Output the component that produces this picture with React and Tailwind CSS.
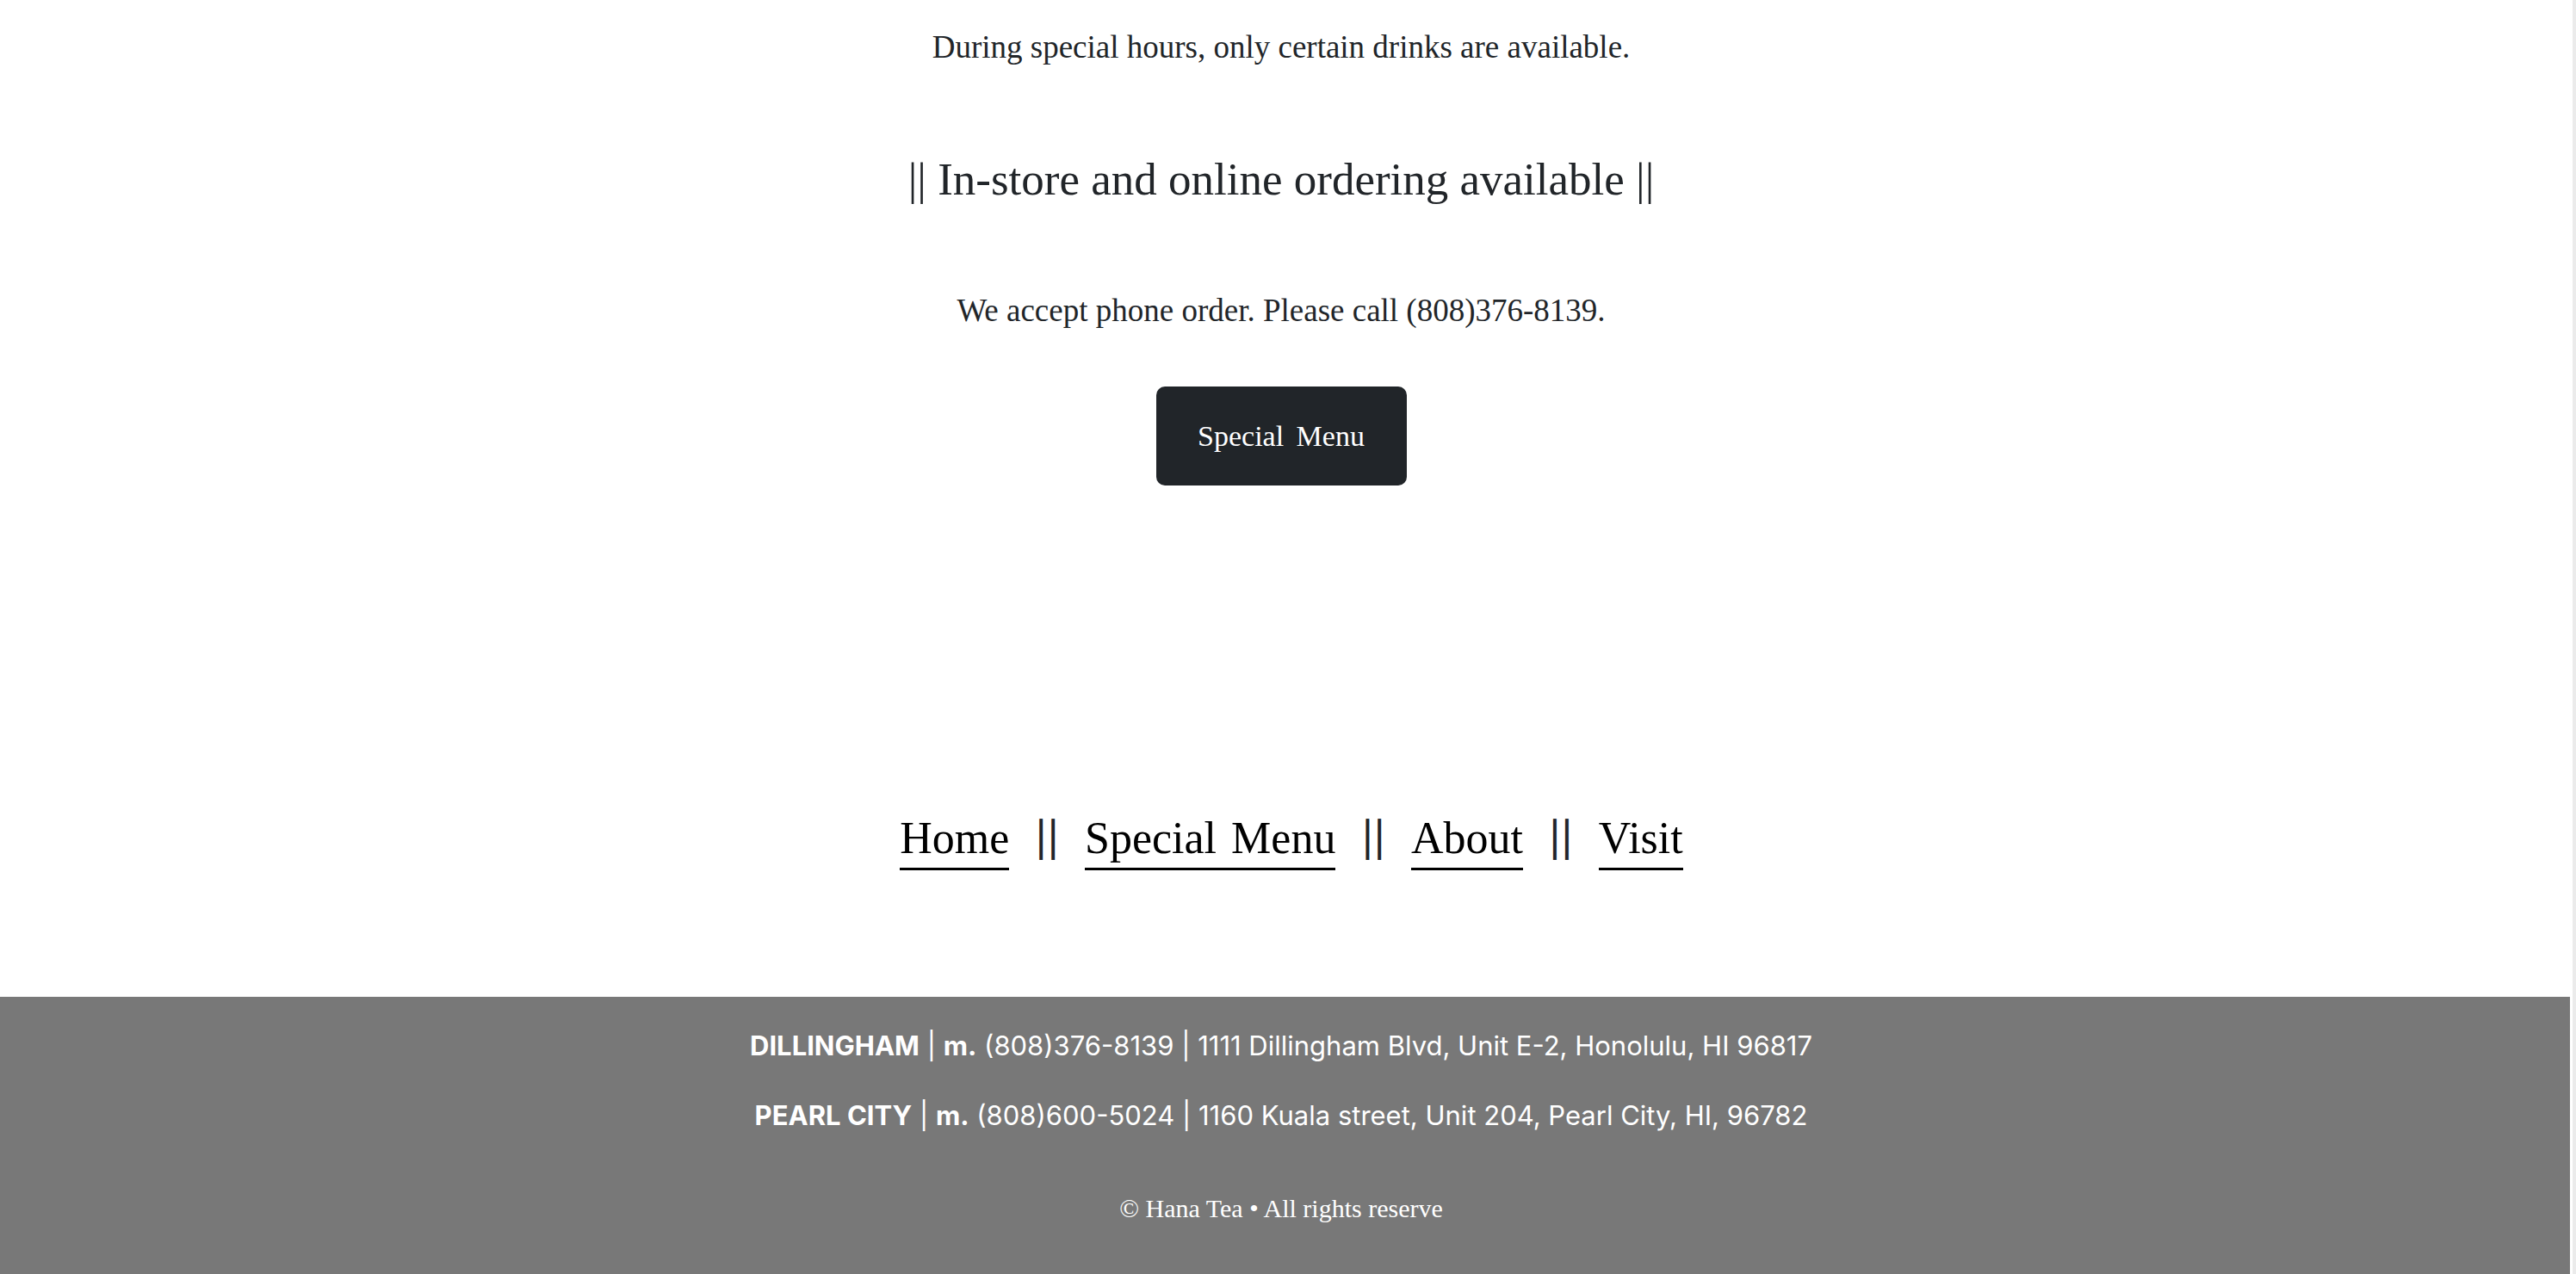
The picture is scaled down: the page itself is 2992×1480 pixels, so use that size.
const serif = "font-['Liberation_Serif','Times_New_Roman',serif]";
const sans = "font-['Inter','Liberation_Sans',sans-serif]";

const navItems = ["Home", "Special Menu", "About", "Visit"];

const NavLink = ({ label }) => (
  <a
    href="#"
    className={`${serif} inline-block text-[52px] leading-[52px] text-black pb-[8px] border-b-[3px] border-black [word-spacing:4px]`}
  >
    {label}
  </a>
);

const App = () => {
  return (
    <div className="flex h-[1480px] w-full overflow-hidden bg-white">
      <div className="flex w-[2985px] shrink-0 flex-col">
        {/* Notice */}
        <section className={`${serif} flex w-[2976px] flex-col items-center pt-[27px] text-[#212529]`}>
          <p className="text-[37px] leading-[56px]">
            During special hours, only certain drinks are available.
          </p>

          <h2 className="mt-[93px] text-[53px] leading-[64px]">
            || In-store and online ordering available ||
          </h2>

          <p className="mt-[93px] text-[37px] leading-[56px]">
            We accept phone order. Please call (808)376-8139.
          </p>

          <button className="mt-[60px] flex h-[115px] w-[291px] items-center justify-center rounded-[10px] bg-[#212529] text-[34px] text-white [word-spacing:6px]">
            Special Menu
          </button>
        </section>

        {/* Nav */}
        <nav className="mt-[384px] flex w-[2976px] items-start justify-center pl-[24px]">
          {navItems.map((item, i) => (
            <div key={item} className="flex items-start">
              {i > 0 && (
                <span className={`${sans} mx-[30px] text-[40px] font-medium leading-[56px] text-[#212529]`}>
                  ||
                </span>
              )}
              <NavLink label={item} />
            </div>
          ))}
        </nav>

        {/* Footer */}
        <footer className="mt-[147px] flex flex-1 flex-col items-center bg-[#787878] pr-[9px] pt-[37px] text-white">
          <p className={`${sans} text-[31px] leading-[40px]`}>
            <b>DILLINGHAM</b> | <b>m.</b> (808)376-8139 | 1111 Dillingham Blvd, Unit E-2, Honolulu, HI 96817
          </p>
          <p className={`${sans} mt-[41px] text-[31px] leading-[40px]`}>
            <b>PEARL CITY</b> | <b>m.</b> (808)600-5024 | 1160 Kuala street, Unit 204, Pearl City, HI, 96782
          </p>
          <p className={`${serif} mt-[68px] text-[30px] leading-[40px]`}>
            © Hana Tea • All rights reserve
          </p>
        </footer>
      </div>

      {/* scrollbar strip */}
      <div className="ml-[3px] w-[4px] shrink-0 bg-[#ebebeb]" />
    </div>
  );
};

export default App;
